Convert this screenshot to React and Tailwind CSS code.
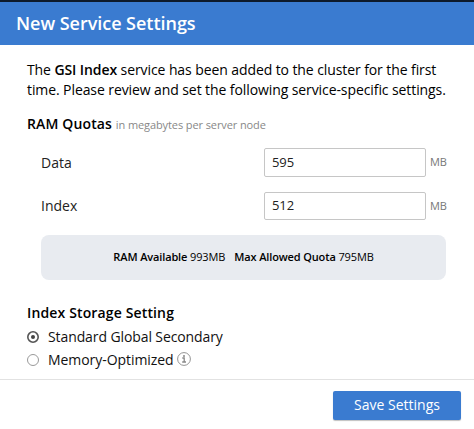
function QuotaRow({ label, value, className }) {
  return (
    <div className={`flex items-center pl-[14px] ${className}`}>
      <label className="w-[223px] text-[14px] leading-5 text-[#222]">{label}</label>
      <input
        defaultValue={value}
        className="h-full w-[162px] rounded-[2px] border border-[#c6c6c6] bg-white px-[7px] pb-[2px] text-[13px] tracking-[-0.1px] text-[#222] outline-none"
      />
      <span className="ml-1 text-[11px] tracking-[-0.2px] text-[#777]">MB</span>
    </div>
  );
}

function Radio({ checked }) {
  return (
    <svg className="mt-[2px] mr-[9px] size-3 shrink-0" viewBox="0 0 12 12" fill="none">
      <circle cx="6" cy="6" r={checked ? 5.2 : 5.5} stroke={checked ? "#555" : "#999"} strokeWidth={checked ? 1.6 : 1} />
      {checked && <circle cx="6" cy="6" r="2" fill="#444" />}
    </svg>
  );
}

export default function App() {
  return (
    <div className="flex h-[429px] w-[474px] flex-col overflow-hidden bg-white font-['Open_Sans',sans-serif] text-black">
      <div className="h-[2px] shrink-0 bg-[#0d1a2b]" />
      <header className="flex h-[43px] shrink-0 items-center bg-[#3a7bd0] pl-4 text-[18px] font-semibold tracking-[-0.03px] text-white">
        New Service Settings
      </header>
      <main className="flex h-[334px] shrink-0 flex-col pt-[15px] pl-[27px]">
        <p className="text-[14px] leading-5 tracking-[-0.09px] whitespace-nowrap">
          The <b className="font-semibold">GSI Index</b> service has been added to the cluster for the first
          <br />
          time. Please review and set the following service-specific settings.
        </p>
        <h2 className="mt-[14px] text-[14px] leading-5 font-semibold tracking-[0.14px]">
          RAM Quotas <small className="text-[11px] font-normal tracking-[-0.1px] text-[#888]">in megabytes per server node</small>
        </h2>
        <QuotaRow label="Data" value="595" className="mt-[13px] h-[29px]" />
        <QuotaRow label="Index" value="512" className="mt-[15px] h-[28px]" />
        <div className="mt-[15px] ml-[14px] flex h-[45px] w-[405px] shrink-0 items-center justify-center gap-[9px] rounded-[8px] bg-[#e8ebf0] text-[11px] tracking-[-0.13px]">
          <span><b className="font-semibold">RAM Available</b> 993MB</span>
          <span><b className="font-semibold">Max Allowed Quota</b> 795MB</span>
        </div>
        <h2 className="mt-[23px] text-[14px] leading-5 font-semibold tracking-[0.14px]">Index Storage Setting</h2>
        <div className="mt-[3px] flex h-5 items-center text-[14px] tracking-[-0.1px] text-[#111]">
          <Radio checked />
          <span>Standard Global Secondary</span>
        </div>
        <div className="mt-[3px] flex h-5 items-center text-[14px] tracking-[-0.06px] text-[#111]">
          <Radio />
          <span>Memory-Optimized</span>
          <svg className="ml-[3px] size-[14px]" viewBox="0 0 14 14" fill="none" stroke="#888">
            <circle cx="7" cy="7" r="6.4" strokeWidth="0.9" />
            <path d="M5.3 6H7.2V10M5.2 10H9" strokeWidth="1.3" />
            <circle cx="7" cy="3.9" r="1" fill="#888" stroke="none" />
          </svg>
        </div>
      </main>
      <footer className="flex h-[50px] shrink-0 items-start justify-end border-t border-[#e2e2e2] pt-[11px] pr-[13px]">
        <button className="h-[29px] w-[128px] rounded-[2px] bg-[#3a7bd0] pb-[2px] text-[14px] text-white shadow-[0_1px_1px_rgba(0,0,0,0.25)]">
          Save Settings
        </button>
      </footer>
    </div>
  );
}
